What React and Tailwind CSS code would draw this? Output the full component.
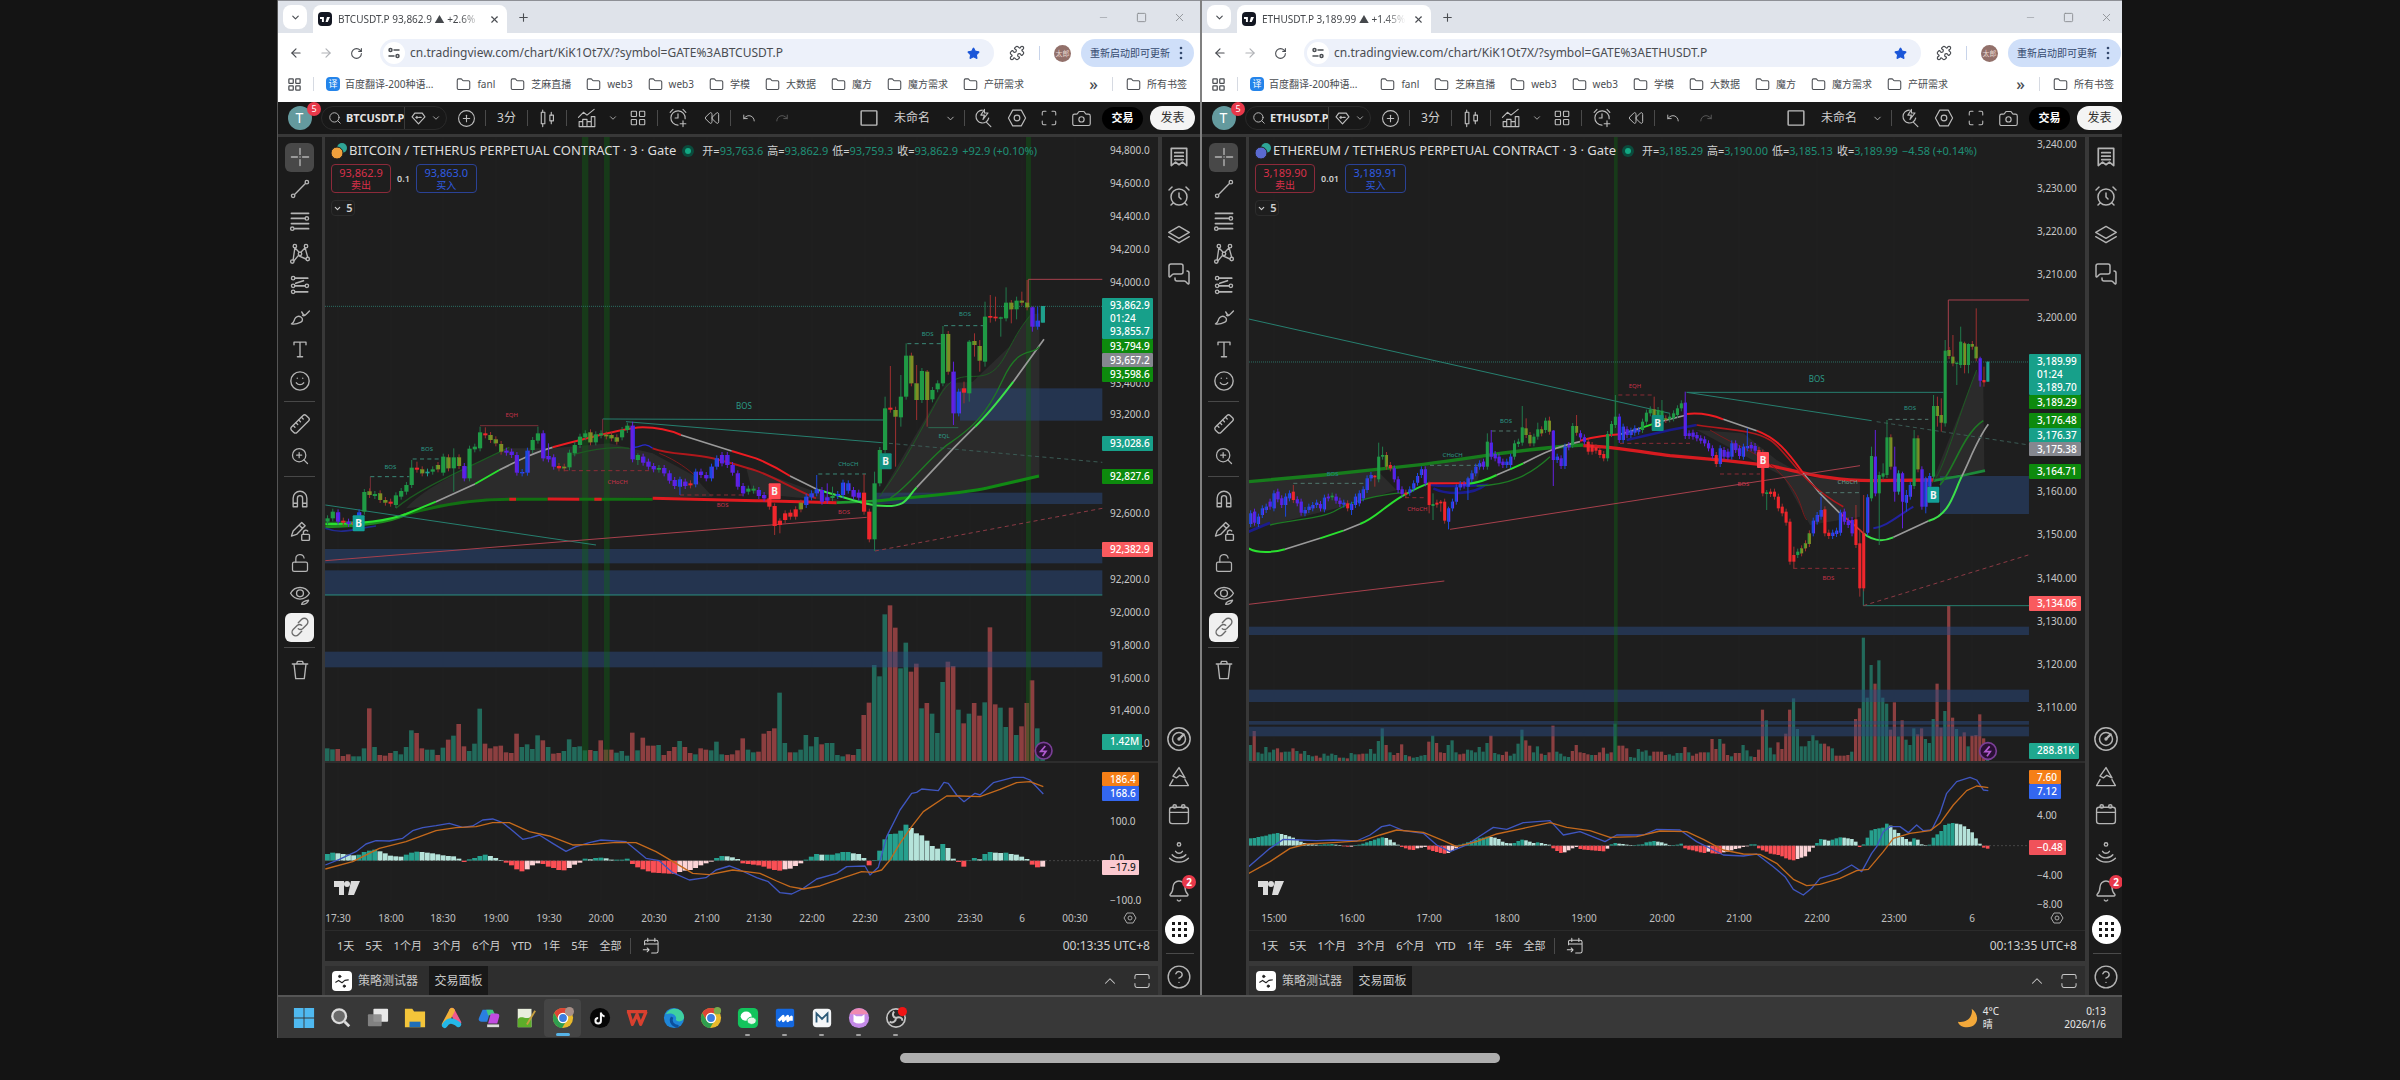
import {
  AlarmClock, ArrowLeft, ArrowRight, Bell, Camera, ChevronDown, ChevronUp, CircleHelp, CirclePlus,
  Folder, Layers, LayoutGrid, Maximize, MessagesSquare, Minus, Plus, Puzzle, Redo, Rewind,
  RotateCw, Ruler, Search, Smile, Square, Star, Undo, LockOpen, X, ZoomIn,
} from 'lucide-react'

const UP = '#226a5b'
const DOWN = '#8c3f40'
const CANDLE = { G: '#1f9a45', O: '#7f8c24', B: '#1b48e0', P: '#6420e0', R: '#f0262c', T: '#1fa08c' }

const btc = {
  symbol: 'BTCUSDT.P',
  tabTitle: 'BTCUSDT.P 93,862.9 ▲ +2.6%',
  url: 'cn.tradingview.com/chart/KiK1Ot7X/?symbol=GATE%3ABTCUSDT.P',
  name: 'BITCOIN / TETHERUS PERPETUAL CONTRACT · 3 · Gate',
  coin: '#f0a03c',
  ohlc: [['开', '93,763.6'], ['高', '93,862.9'], ['低', '93,759.3'], ['收', '93,862.9']],
  change: '+92.9 (+0.10%)',
  sell: '93,862.9',
  lot: '0.1',
  buy: '93,863.0',
  width: 833,
  left: -49,
  axis: 777,
  plotEnd: 2479,
  first: 154.6,
  step: 15.78,
  zero: 1982,
  bolt: [2303, 1652],
  ticks: [
    [13, '94,800.0'], [46, '94,600.0'], [79, '94,400.0'], [112, '94,200.0'], [145, '94,000.0'], [246, '93,400.0'],
    [277, '93,200.0'], [376, '92,600.0'], [442, '92,200.0'], [475, '92,000.0'], [508, '91,800.0'],
    [541, '91,600.0'], [573, '91,400.0'], [606, '91,200.0'], [684, '100.0'], [721, '0.0'], [763, '−100.0'],
  ],
  tags: [
    [161, 41, 51, '#17a08a', ['93,862.9', '01:24', '93,855.7']],
    [202, 14, 51, '#0d8a0d', ['93,794.9']],
    [216, 14, 51, '#85878f', ['93,657.2']],
    [230, 15, 51, '#0d8a0d', ['93,598.6']],
    [299, 15, 51, '#17a08a', ['93,028.6']],
    [332, 15, 51, '#0d8a0d', ['92,827.6']],
    [405, 15, 51, '#f95a5e', ['92,382.9']],
    [597, 16, 40, '#1fa88f', ['1.42M']],
    [635, 14, 37, '#f57f17', ['186.4']],
    [649, 15, 37, '#3367f0', ['168.6']],
    [723, 15, 37, '#fbc9d0', ['−17.9'], '#222222'],
  ],
  times: [
    [13, '17:30'], [66, '18:00'], [118, '18:30'], [171, '19:00'], [224, '19:30'], [276, '20:00'], [329, '20:30'],
    [382, '21:00'], [434, '21:30'], [487, '22:00'], [540, '22:30'], [592, '23:00'], [645, '23:30'], [697, '6'], [750, '00:30'],
  ],
  gear: 805,
  sessions: [[918, 19], [984, 17], [2250, 15]],
  zones: [[147, 1047, 2479, 43], [147, 1111, 2479, 74], [147, 1355, 2479, 47], [2052, 565, 2479, 97], [1800, 878, 2479, 34]],
  clouds: [
    'M390 925C450 860 560 810 700 745L830 745 1000 730 1130 760 1250 825 1310 890 700 897 500 915Z',
    'M1430 880L1700 905 1410 800Z',
    'M1810 890L2010 550 2090 545 2200 440 2260 345 2290 340 2290 830 2050 876Z',
  ],
  lines: [
    ['M147 1185H2479', '#2b8f80', 3],
    ['M148 980C230 978 330 972 390 943', '#1f8a1f', 9],
    ['M390 943C500 912 590 898 700 898H815', '#127012', 9],
    ['M910 898H1130', '#127012', 9],
    ['M815 897L910 898M955 898h22M700 898h20M1130 895L1440 902 1682 908', '#e01b20', 9],
    ['M1682 908L1800 903', '#1f9a30', 8],
    ['M1800 903C1980 885 2060 880 2130 865L2289 828', '#118a14', 9],
    ['M148 985C200 1005 240 985 300 978', '#222a90', 5],
    ['M148 972C250 972 330 965 390 942L480 905M597 852L670 810', '#2ae02f', 6],
    ['M480 905L597 852M670 810C730 780 780 755 830 742', '#9a9a9a', 5],
    ['M830 742C930 715 1060 682 1100 682S1180 690 1215 705M1367 753L1440 775Q1490 795 1542 828', '#ee1c22', 6],
    ['M1215 705L1367 753M1542 828L1627 870', '#9a9a9a', 5],
    ['M1627 870C1720 895 1770 918 1832 918S1890 895 1922 862M2097 680C2140 640 2170 600 2212 545', '#3ce04a', 6],
    ['M1922 862L2032 745 2097 680M2212 545L2304 418', '#9a9a9a', 5],
    ['M148 968L230 965M1842 895C1900 860 1960 770 2020 730S2130 650 2180 540 2270 470 2290 440', '#1e7a24', 4],
    ['M1810 890C1880 800 1940 680 1990 590S2090 545 2140 520 2200 420 2260 350', '#1d5a22', 3],
    ['M360 925C420 870 560 810 700 742M890 764C960 745 1020 740 1060 745', '#1d5a22', 4],
    ['M1070 740C1090 750 1100 720 1130 745', '#2a2ad0', 4],
    ['M1130 745C1180 765 1250 760 1310 775S1400 800 1440 812 1560 870 1620 895', '#b0181c', 6],
    ['M1150 760C1200 780 1240 810 1260 830', '#7a1a1c', 3],
    ['M148 915L960 1035M980 657L1822 660M1050 665L1817 728', '#26806f', 3],
    ['M1817 728L2479 787', '#3a5a54', 3, '12 10'],
    ['M148 1082L1772 952M2257 320V238H2479', '#a8404c', 3],
    ['M1797 1053L2479 925', '#8c3a44', 3, '12 10'],
    ['M283 880V830M612 677H787M980 705V657', '#7a3038', 3],
    ['M283 830H400M410 777H490M1627 822H1770M1894 431H1995M2004 377H2130', '#3b8a78', 3, '12 10'],
    ['M865 812H1130M1212 885H1400', '#8c2c36', 3, '12 10'],
    ['M1957 683H2047', '#2c6a50', 3],
  ],
  dotted: 319,
  notes: [
    [343, 800, 'BOS', '#2b9a86'], [453, 746, 'BOS', '#2b9a86'], [707, 645, 'EQH', '#c8324a'],
    [1025, 846, 'CHoCH', '#c8324a'], [1340, 915, 'BOS', '#c8324a'], [1717, 792, 'CHoCH', '#2b9a86'],
    [1955, 403, 'BOS', '#2b9a86'], [2067, 343, 'BOS', '#2b9a86'], [1704, 936, 'BOS', '#c8324a'],
    [2004, 708, 'EQL', '#2b9a86'],
  ],
  bigNote: [1404, 617],
  badges: [[248, 970, '#12a098'], [1496, 874, '#ff4650'], [1829, 784, '#12907f']],
  macd: [
    'M148 1995L190 1978 240 1955 270 1932 300 1922 340 1923 380 1915 410 1892 440 1883 480 1877 520 1870 560 1882 590 1878 620 1860 650 1857 680 1868 710 1892 740 1918 765 1913 790 1905 830 1930 870 1954 900 1940 940 1928 975 1920 1050 1925 1080 1950 1110 1975 1150 1982 1190 2018 1240 2040 1290 2033 1320 2010 1360 1998 1392 2010 1442 2033 1477 2045 1512 2078 1547 2082 1582 2065 1622 2037 1682 2020 1712 2000 1767 1998 1782 2025 1807 2002 1832 1910 1872 1830 1907 1780 1922 1777 1937 1767 1987 1772 2004 1747 2017 1750 2042 1785 2064 1805 2097 1780 2112 1785 2152 1748 2212 1732 2242 1732 2262 1740 2302 1782',
    'M148 2007L230 1985 310 1945 390 1925 480 1892 540 1883 600 1880 650 1868 700 1868 760 1895 820 1908 890 1935 950 1933 1020 1927 1080 1928 1140 1955 1200 1990 1250 2020 1300 2024 1370 2010 1452 2020 1502 2043 1542 2060 1582 2067 1632 2058 1692 2037 1757 2015 1792 2017 1817 2010 1842 1980 1872 1930 1907 1880 1942 1835 2012 1788 2052 1788 2112 1790 2172 1768 2222 1748 2262 1745 2302 1760',
  ],
  volume: [
    38, 35, -36, -15, -20, 14, 14, 38, -158, 42, -18, -16, -24, 30, 20, 42, 92, -84, -38, 34, 34, -18, 40, -64, 76,
    -111, -44, 30, 52, 157, -52, -38, -44, -46, -26, -24, -82, 42, 50, 36, 77, -62, 42, -22, -24, 30, 65, 42, 44, 32,
    -33, 30, -62, -34, -34, 25, 30, 16, -85, 32, -70, -46, -46, 48, -18, -30, -42, 60, -42, -24, 20, -38, -34, 32, 58,
    20, -18, -20, -32, -68, 34, 26, -28, -82, -90, -98, 205, 54, -26, 26, 34, 78, 44, 72, -50, 54, 54, 18, 14, -20,
    -18, 36, -138, -175, 288, 254, 440, -467, -400, 278, 355, -268, -292, 158, -174, 142, 84, 237, -298, -285, 154,
    -113, 142, -174, -136, 176, -401, -170, 160, 102, -160, 78, -104, -174, -242, 98, 30,
  ],
  hist: [
    20, 24, 22, 20, 18, 16, 18, 26, 30, 33, 28, 22, 15, 13, 12, 18, 24, 27, 26, 24, 22, 19, 16, 14, 13, 6, -4, 4, 8,
    14, 18, 14, 8, 2, -6, -14, -26, -32, -26, -14, -8, -10, -18, -22, -28, -29, -22, -12, -6, 6, 4, 8, 9, 7, 3, 3, 3,
    6, -10, -20, -26, -32, -36, -37, -38, -39, -40, -34, -30, -28, -22, -14, -8, -3, 8, 14, 13, 10, 5, -8, -10, -12,
    -14, -18, -24, -28, -30, -26, -24, -16, -8, 3, 12, 20, 18, 18, 18, 22, 26, 26, 22, 20, 8, -14, 2, 30, 64, 80, 81,
    90, 108, 98, 82, 76, 60, 44, 36, 50, 38, 6, -4, -18, 1, 8, 4, 20, 26, 24, 23, 24, 20, 18, 12, 5, -12, -20, -18,
  ],
  candles: [
    [955, 965, 'G'], [935, 955, 'G'], [937, 965, 'P'], [962, 968, 'R'], [965, 972, 'P'], [965, 975, 'R'], [937, 975, 'B'],
    [876, 935, 'G'], [874, 885, 'O'], [882, 888, 'G'], [880, 900, 'O'], [900, 908, 'O'], [905, 911, 'R'], [886, 915, 'G'],
    [873, 890, 'G'], [855, 875, 'G'], [803, 855, 'G', 780], [803, 809, 'R', 785], [808, 820, 'O'], [815, 820, 'T'],
    [808, 815, 'G'], [795, 808, 'O'], [770, 818, 'G'], [772, 805, 'O'], [772, 805, 'G', 745, 875], [772, 798, 'O'],
    [798, 835, 'P'], [746, 835, 'G'], [740, 748, 'G'], [697, 745, 'G', 680], [700, 706, 'R', 682], [705, 720, 'O'],
    [718, 730, 'O'], [732, 755, 'O'], [752, 758, 'P'], [755, 765, 'P'], [765, 818, 'P'], [816, 820, 'B'], [752, 818, 'B'],
    [720, 750, 'G'], [700, 722, 'G', 680], [700, 775, 'P'], [768, 778, 'P', 730], [772, 800, 'P'], [798, 805, 'R'],
    [800, 805, 'O'], [758, 802, 'G'], [735, 760, 'G'], [710, 735, 'G'], [700, 712, 'G'], [697, 727, 'O'], [703, 727, 'G'],
    [700, 706, 'G'], [704, 709, 'O'], [705, 715, 'O'], [712, 725, 'O'], [690, 712, 'G'], [677, 690, 'G'],
    [677, 778, 'P', 665], [765, 780, 'G', 760, 795], [770, 788, 'P'], [785, 800, 'P'], [798, 808, 'P'], [804, 809, 'G'],
    [804, 820, 'P'], [820, 842, 'P'], [840, 858, 'P'], [838, 860, 'B', 830, 885], [845, 858, 'P'], [850, 856, 'R'],
    [815, 853, 'B'], [815, 825, 'P'], [825, 835, 'P'], [800, 835, 'B'], [775, 800, 'B'], [765, 790, 'P'], [765, 795, 'P'],
    [795, 818, 'P'], [820, 860, 'P'], [858, 880, 'P'], [866, 875, 'G'], [866, 872, 'G'], [870, 888, 'P'], [885, 895, 'P'],
    [895, 920, 'R'], [918, 978, 'R', 910, 1005], [962, 975, 'R', 955, 1000], [940, 960, 'R'], [938, 950, 'R'],
    [928, 950, 'R'], [908, 928, 'O'], [890, 915, 'B'], [880, 892, 'B'], [868, 880, 'B', 825], [870, 905, 'P'],
    [892, 902, 'P', 850], [888, 894, 'G', 860], [882, 888, 'B'], [848, 885, 'B'], [850, 872, 'B'], [870, 890, 'P'],
    [878, 893, 'P'], [878, 935, 'R', 822], [935, 1018, 'R'], [850, 1018, 'G', 815, 1053], [750, 850, 'G'],
    [625, 750, 'G', 590], [623, 629, 'R', 498], [630, 650, 'O', 620, 800], [590, 652, 'G', 525, 680], [467, 590, 'G', 430],
    [467, 550, 'O'], [550, 600, 'O', 495, 660], [513, 600, 'G'], [515, 600, 'O', 510, 680], [570, 598, 'G'],
    [550, 568, 'G'], [402, 550, 'G', 378], [402, 515, 'O'], [515, 640, 'P', 485, 675], [575, 640, 'B'],
    [565, 578, 'R', 545, 610], [425, 580, 'G', 420, 605], [423, 435, 'O', 400, 470], [438, 482, 'O', 420, 515],
    [350, 485, 'G', 305, 500], [348, 353, 'R', 285, 368], [350, 355, 'R', 290], [352, 356, 'G', 350, 410],
    [308, 355, 'G', 262], [308, 328, 'O', 300, 370], [302, 328, 'G', 290, 358], [302, 308, 'O', 275], [308, 322, 'O', 240],
    [322, 380, 'P', 320, 395], [362, 380, 'B', 320], [318, 368, 'T', 318, 368],
  ],
}

const eth = {
  symbol: 'ETHUSDT.P',
  tabTitle: 'ETHUSDT.P 3,189.99 ▲ +1.45%',
  url: 'cn.tradingview.com/chart/KiK1Ot7X/?symbol=GATE%3AETHUSDT.P',
  name: 'ETHEREUM / TETHERUS PERPETUAL CONTRACT · 3 · Gate',
  coin: '#5a6ad0',
  ohlc: [['开', '3,185.29'], ['高', '3,190.00'], ['低', '3,185.13'], ['收', '3,189.99']],
  change: '−4.58 (+0.14%)',
  sell: '3,189.90',
  lot: '0.01',
  buy: '3,189.91',
  width: 836,
  left: -59,
  axis: 780,
  plotEnd: 2517,
  first: 182,
  step: 11.64,
  zero: 1937,
  bolt: [2394, 1653],
  ticks: [
    [7, '3,240.00'], [51, '3,230.00'], [94, '3,220.00'], [137, '3,210.00'], [180, '3,200.00'], [354, '3,160.00'],
    [397, '3,150.00'], [441, '3,140.00'], [484, '3,130.00'], [527, '3,120.00'], [570, '3,110.00'], [678, '4.00'],
    [738, '−4.00'], [767, '−8.00'],
  ],
  tags: [
    [217, 41, 52, '#17a08a', ['3,189.99', '01:24', '3,189.70']],
    [258, 14, 52, '#0d8a0d', ['3,189.29']],
    [276, 15, 52, '#0d8a0d', ['3,176.48']],
    [291, 14, 52, '#17a08a', ['3,176.37']],
    [305, 14, 52, '#85878f', ['3,175.38']],
    [327, 15, 52, '#0d8a0d', ['3,164.71']],
    [459, 15, 52, '#f95a5e', ['3,134.06']],
    [606, 16, 50, '#1fa88f', ['288.81K']],
    [633, 14, 32, '#f57f17', ['7.60']],
    [647, 15, 32, '#3367f0', ['7.12']],
    [703, 15, 37, '#f0525a', ['−0.48']],
  ],
  times: [
    [25, '15:00'], [103, '16:00'], [180, '17:00'], [258, '18:00'], [335, '19:00'], [413, '20:00'], [490, '21:00'],
    [568, '22:00'], [645, '23:00'], [723, '6'],
  ],
  gear: 808,
  sessions: [[1272, 11]],
  zones: [[176, 1280, 2517, 25], [176, 1469, 2517, 37], [176, 1563, 2517, 11], [176, 1580, 2517, 29], [2250, 828, 2517, 114]],
  clouds: [
    'M176 845L400 826 560 810 620 870 440 925 240 975 176 985Z',
    'M700 795L880 770 860 850 715 850Z',
    'M1520 690L1660 700 1760 780 1850 830 2010 842 2010 950 1860 975 1780 830Z',
    'M2230 838L2360 510 2380 560 2383 810Z',
  ],
  lines: [
    ['M715 853C760 862 830 858 885 855 850 885 770 885 730 865M1310 720L1440 690 1520 675M176 995L240 968', '#1b1b8c', 8],
    ['M176 845L400 825 560 808 700 793C880 770 1000 745 1180 735', '#177d1c', 10],
    ['M1180 737C1270 740 1350 755 1440 767L1610 782 1740 797C1850 820 1920 842 2050 842L2230 840', '#d81b20', 10],
    ['M2230 842L2310 828 2385 812', '#1d8a3a', 8],
    ['M176 1045C200 1060 250 1058 285 1048M390 1015L460 992M510 972C570 950 590 900 715 850M830 852C870 848 900 835 920 825M960 808L1000 790M1350 685L1410 665', '#2ae02f', 6],
    ['M285 1048L390 1015M460 992L510 972M920 825L960 808M1000 790C1040 770 1080 745 1170 725M1290 703L1350 685M1410 665L1490 645', '#9a9a9a', 5],
    ['M715 850H830M1170 722C1210 712 1240 705 1290 703M1490 642C1530 638 1560 642 1600 658M1700 692C1760 715 1790 750 1840 820', '#ee1c22', 6],
    ['M1600 658L1700 692M1840 820L1890 880 1950 940', '#9a9a9a', 5],
    ['M1950 940C1980 965 2000 980 2020 1000', '#e03030', 5],
    ['M2020 1000C2050 1025 2080 1025 2110 1012M2215 963C2280 945 2290 880 2315 830', '#3ce04a', 6],
    ['M2110 1012L2215 963M2315 830C2340 780 2360 720 2395 673', '#9a9a9a', 5],
    ['M240 975C330 955 400 955 440 930S560 885 640 878M860 858C960 855 1020 825 1080 770', '#1e7a24', 4],
    ['M2225 850C2260 820 2300 660 2360 510', '#1d5a22', 3],
    ['M2250 855C2290 810 2320 700 2380 662', '#1e7a24', 5],
    ['M2050 985C2090 980 2120 950 2170 920', '#2222a0', 6],
    ['M1520 675C1620 690 1690 690 1740 720S1830 850 1960 920', '#b0181c', 5],
    ['M1560 690C1640 740 1720 760 1780 830S1830 930 1850 960', '#7a1a1c', 3],
    ['M176 357L1440 640M1490 577H2260M1490 577L2045 662M2020 1217H2517M2020 1165V1217', '#26806f', 3],
    ['M2060 665L2517 735', '#3a5a54', 3, '12 10'],
    ['M780 988L1410 890 2010 797M176 1213L763 1143M2275 450V300H2517', '#a8404c', 3],
    ['M2020 1217L2515 1065', '#8c3a44', 3, '12 10'],
    ['M310 850H520M720 796H880M905 693H980M2095 658H2215M1885 878H2015', '#50776e', 3, '12 10'],
    ['M1285 585H1390M645 893H710M1290 730H1500M1590 822H1710M1810 1105H1995', '#8c2c36', 3, '12 10'],
  ],
  dotted: 486,
  notes: [
    [428, 823, 'BOS', '#2b7a96'], [788, 766, 'CHoCH', '#2b9a86'], [948, 662, 'BOS', '#2b9a86'],
    [682, 926, 'CHoCH', '#c8324a'], [1335, 558, 'EQH', '#c8324a'], [2160, 625, 'BOS', '#2b9a86'],
    [1973, 847, 'CHoCH', '#6aa090'], [1660, 852, 'BOS', '#c8324a'], [1915, 1135, 'BOS', '#c8324a'],
  ],
  bigNote: [1880, 537],
  badges: [[1403, 669, '#12907f'], [1719, 780, '#ff4650'], [2230, 884, '#12a098']],
  macd: [
    'M176 2000L240 1945 280 1918 330 1920 380 1922 430 1920 500 1923 540 1905 575 1880 600 1875 640 1892 700 1900 740 1935 780 1955 830 1935 870 1908 910 1882 950 1888 1000 1868 1080 1862 1120 1905 1170 1895 1245 1925 1280 1905 1360 1905 1400 1888 1470 1890 1520 1925 1600 1965 1660 1968 1700 1962 1750 2000 1785 2030 1810 2068 1840 2085 1865 2065 1890 2035 1940 2020 1985 1995 2015 2015 2045 1960 2060 1940 2080 1895 2100 1880 2130 1880 2155 1898 2180 1875 2200 1892 2225 1890 2250 1840 2270 1780 2300 1745 2340 1732 2360 1740 2380 1770 2395 1772',
    'M176 2020L240 1985 300 1945 350 1932 430 1928 520 1922 570 1905 620 1890 700 1897 760 1922 800 1940 860 1925 920 1902 1000 1885 1080 1868 1130 1882 1200 1892 1260 1912 1340 1910 1410 1893 1490 1895 1540 1918 1600 1950 1660 1962 1710 1963 1760 1990 1810 2038 1850 2057 1890 2053 1950 2035 2000 2012 2035 2008 2080 1955 2110 1915 2160 1900 2220 1892 2250 1870 2290 1815 2330 1772 2360 1758 2395 1763',
  ],
  volume: [
    48, -90, 26, 22, 42, 26, 34, -38, -26, 28, 28, -38, 30, -22, 30, 18, 14, -16, -10, 22, 16, 22, 18, -10, 10, -8, 24,
    20, -20, -22, 22, 36, 22, 60, 98, -48, 26, -18, -24, -50, 18, -14, 10, 12, 16, 18, -58, 76, -54, -26, -24, 48, 62,
    26, -20, -22, 34, 32, 26, 42, 28, 54, -76, 24, 20, -18, -28, 16, 22, 52, 94, -62, -46, 26, 44, -22, 18, -26, -106,
    28, 22, 14, 12, -30, -48, -26, -24, -20, 18, -18, -26, -40, 22, -26, 112, -46, -46, -38, 12, 10, 36, 28, 32, 16,
    -28, -28, -28, -18, 20, 16, 24, 24, -42, 26, -16, -22, -26, -26, 26, -66, -36, 66, -52, -18, 14, -24, -24, 48, 32,
    14, -12, -34, -154, 122, 40, 20, -56, -36, -82, -154, 188, 96, 44, 44, 60, 78, 62, 52, -52, -44, 38, -16, -16, -16,
    -18, 28, -126, -158, 370, 190, 288, -232, 302, 190, 172, -94, -176, 74, -122, 64, 48, 98, -80, -98, 66, 54, 126,
    -232, -100, 150, -466, -130, 96, -74, -86, 44, -76, -78, -140, -68, 20,
  ],
  hist: [
    22, 23, 26, 28, 30, 34, 36, 38, 35, 32, 28, 24, 18, 12, 8, 5, 4, 3, 3, 4, 4, 5, 3, 2, -2, -3, -3, 2, 3, 6, 10, 14,
    18, 22, 25, 23, 18, 10, 3, -4, -8, -12, -13, -8, -6, -4, -12, -16, -19, -22, -24, -22, -16, -8, 3, 6, 10, 14, 18,
    22, 24, 27, 26, 24, 20, 12, 8, 7, 8, 14, 18, 16, 12, 8, 10, 8, 5, 3, -8, -16, -22, -20, -14, -8, -4, -10, -12, -13,
    -14, -15, -16, -17, -9, 4, 8, 6, 5, 3, 2, 2, 3, 4, 10, 12, 14, 12, 10, 6, 2, 2, 3, 6, -8, -12, -14, -17, -20, -22,
    -18, -23, -24, -25, -20, -18, -14, -10, -8, -4, -2, 4, 4, -8, -14, -18, -24, -26, -28, -32, -38, -42, -44, -40,
    -36, -32, -18, -6, 8, 20, 18, 15, 18, 22, 25, 24, 22, 20, 12, -4, 4, 24, 46, 50, 52, 54, 66, 60, 48, 38, 26, 20,
    12, 22, 18, 4, 2, 3, 24, 34, 44, 62, 66, 68, 66, 64, 58, 50, 40, 22, 6, -6, -9,
  ],
  candles: [
    [940, 972, 'B'], [935, 968, 'P'], [950, 972, 'B'], [925, 945, 'B'], [920, 930, 'B'], [905, 920, 'P'], [880, 925, 'B'],
    [875, 898, 'P'], [895, 915, 'P'], [890, 915, 'B', 880, 950], [880, 895, 'B'], [875, 900, 'R', 855], [898, 910, 'P'],
    [905, 938, 'P'], [930, 940, 'B'], [920, 930, 'B'], [915, 925, 'B'], [908, 915, 'B'], [912, 925, 'P'], [893, 928, 'B'],
    [890, 895, 'P'], [887, 892, 'G'], [890, 902, 'P'], [902, 912, 'P'], [908, 914, 'B'], [910, 925, 'R'],
    [912, 930, 'B', 905, 945], [890, 915, 'B'], [880, 910, 'B'], [868, 895, 'B'], [835, 870, 'B'], [825, 835, 'B'],
    [827, 832, 'R', 825, 860], [770, 838, 'G', 728], [765, 770, 'G', 740], [765, 800, 'O'], [795, 805, 'R'],
    [805, 838, 'P'], [838, 870, 'P'], [868, 882, 'P'], [878, 884, 'R'], [868, 878, 'B'], [850, 866, 'B'], [828, 848, 'B'],
    [808, 825, 'B'], [808, 850, 'P'], [850, 915, 'R', 845, 940], [912, 918, 'G', 880, 960], [908, 914, 'R'],
    [905, 910, 'R', 900, 935], [905, 962, 'R'], [925, 965, 'B', 920, 988], [905, 925, 'B'], [862, 905, 'B'],
    [852, 862, 'B'], [852, 857, 'P'], [835, 860, 'B', 830, 900], [820, 838, 'B'], [800, 820, 'B'], [790, 800, 'B'],
    [785, 800, 'P'], [725, 800, 'G', 700], [728, 770, 'P', 690], [762, 775, 'P'], [770, 790, 'P'], [785, 795, 'P'],
    [785, 795, 'B'], [770, 795, 'B'], [730, 770, 'G'], [725, 732, 'G'], [682, 728, 'G', 618], [685, 705, 'O', 655],
    [705, 730, 'O'], [710, 730, 'G'], [688, 710, 'G', 668], [688, 700, 'O'], [662, 690, 'G'], [662, 695, 'O', 650],
    [692, 780, 'P', 690, 858], [770, 780, 'B'], [775, 798, 'P'], [740, 798, 'B'], [735, 742, 'P'], [678, 735, 'G'],
    [678, 698, 'O', 645], [700, 712, 'P'], [712, 725, 'P'], [725, 755, 'R'], [735, 755, 'R'], [742, 752, 'R'],
    [750, 765, 'R'], [762, 775, 'R'], [702, 775, 'G'], [672, 702, 'G'], [650, 675, 'G', 585], [650, 720, 'P'],
    [680, 720, 'B'], [688, 705, 'P'], [692, 705, 'B'], [685, 698, 'B'], [690, 695, 'B'], [665, 690, 'G'],
    [638, 665, 'G'], [628, 640, 'G'], [628, 645, 'O', 590], [630, 650, 'G'], [632, 658, 'G', 600], [655, 660, 'O'],
    [650, 658, 'G'], [640, 655, 'G'], [625, 645, 'G'], [610, 625, 'G'], [608, 708, 'P', 575], [700, 708, 'P'],
    [698, 710, 'P'], [705, 715, 'P'], [715, 722, 'P'], [718, 730, 'P'], [730, 745, 'P'], [745, 768, 'P'],
    [765, 792, 'R'], [745, 792, 'B'], [750, 770, 'P'], [755, 772, 'P'], [730, 770, 'B'], [730, 750, 'P'],
    [745, 768, 'P'], [740, 770, 'B'], [738, 745, 'B', 685], [735, 745, 'P'], [738, 752, 'P'], [750, 758, 'R'],
    [758, 880, 'R'], [877, 882, 'G', 870, 930], [875, 882, 'R'], [875, 890, 'R'], [890, 925, 'R'], [920, 940, 'R'],
    [935, 968, 'R'], [965, 1085, 'R'], [1065, 1085, 'R', 1040, 1105], [1055, 1065, 'G'], [1045, 1060, 'O'],
    [1030, 1045, 'O'], [1000, 1032, 'O'], [962, 1000, 'B'], [945, 965, 'B'], [930, 950, 'B', 890], [928, 1000, 'R'],
    [998, 1008, 'R'], [998, 1008, 'B'], [992, 1002, 'B'], [938, 998, 'B'], [935, 965, 'P'], [962, 975, 'P'],
    [960, 1000, 'P'], [958, 1035, 'R', 915], [1030, 1165, 'R', 990, 1190], [1000, 1165, 'R', 885], [892, 998, 'B'],
    [768, 895, 'G', 740], [770, 880, 'P', 690], [825, 880, 'G', 815, 1035], [820, 830, 'G', 790], [712, 825, 'G', 660],
    [712, 800, 'O'], [800, 875, 'P', 740, 905], [820, 875, 'T'], [820, 905, 'P', 815, 985], [885, 908, 'B', 870, 935],
    [855, 890, 'B'], [715, 858, 'G', 690], [715, 808, 'O'], [808, 920, 'P'], [835, 920, 'B', 830, 940], [828, 860, 'B'],
    [618, 830, 'G', 585], [618, 648, 'O', 590, 680], [645, 668, 'O', 595, 695], [452, 670, 'G', 420, 680],
    [450, 468, 'O'], [470, 490, 'O', 405], [488, 492, 'G', 488, 555], [425, 495, 'G', 380], [430, 495, 'O', 425, 520],
    [432, 495, 'G', 430, 520], [432, 440, 'O'], [440, 475, 'O', 325], [475, 542, 'P', 470, 560], [540, 547, 'R', 500, 560],
    [485, 545, 'T', 485, 545],
  ],
}

// plots are drawn at three units to a pixel
function ChartDrawing({ m }) {
  const x = (i) => m.first + i * m.step
  const px = (v) => v / 3 + m.left
  const py = (v) => v / 3 + 63
  const plotLeft = -m.left * 3
  return (
    <svg viewBox={`0 0 ${m.width} 793`} className="block w-full h-auto" role="img" aria-label={m.name}>
      <rect width={m.width} height="793" fill="#1e1e1e" />
      <g transform={`translate(${m.left} 63) scale(0.33333)`}>
        {m.times.map(([t]) => <path key={t} d={`M${(t - m.left) * 3} -189V2100`} stroke="#222222" strokeWidth="3" />)}
        {m.clouds.map((d) => <path key={d} d={d} fill="#2b2b2b" />)}
        {m.volume.map((v, i) => (
          <rect key={i} x={x(i) - m.step / 2} y={1683 - Math.abs(v)} width={m.step - 2} height={Math.abs(v)} fill={v > 0 ? UP : DOWN} />
        ))}
        {m.zones.map(([zx, y, x2, h]) => <rect key={y} x={zx} y={y} width={x2 - zx} height={h} fill="#2a4a80" opacity="0.5" />)}
        {m.sessions.map(([sx, w]) => <rect key={sx} x={sx} y="-189" width={w} height="1872" fill="#0c6a12" opacity="0.38" />)}
        <path d={`M${plotLeft} ${m.dotted}H${m.plotEnd}`} stroke="#2c6f64" strokeWidth="3" strokeDasharray="3 3" />
        {m.lines.map(([d, stroke, w, dash]) => (
          <path key={d} d={d} stroke={stroke} strokeWidth={w} strokeDasharray={dash} fill="none" />
        ))}
        {m.candles.map(([top, bottom, c, hi = top - 9, lo = bottom + 9], i) => (
          <g key={i}>
            <path d={`M${x(i)} ${hi}V${lo}`} stroke={c === 'O' || c === 'R' ? '#a03030' : c === 'G' ? '#217a4c' : CANDLE[c]} strokeWidth="3" />
            <rect x={x(i) - m.step * 0.4} y={top} width={m.step * 0.8} height={bottom - top} fill={CANDLE[c]} />
            {(c === 'P' || c === 'B') && (
              <path d={`M${x(i) + m.step * 0.3} ${top}V${bottom}`} stroke={c === 'P' ? '#2f2ff0' : '#7030f0'} strokeWidth="3" />
            )}
            {c === 'O' && <path d={`M${x(i) - m.step * 0.3} ${top}V${bottom}`} stroke="#2f9a35" strokeWidth="3" />}
          </g>
        ))}
        {m.hist.map((v, i) => {
          const prev = m.hist[i - 1] ?? 0
          const fill = v > 0 ? (v >= prev ? '#26a08e' : '#b5e3da') : v < prev ? '#fb4f55' : '#fbd3d6'
          return <rect key={i} x={x(i) - m.step / 2} y={v > 0 ? m.zero - v : m.zero} width={m.step - 1} height={Math.abs(v)} fill={fill} />
        })}
        <path d={`M${plotLeft} ${m.zero}H${m.plotEnd}`} stroke="#5a5a5a" strokeWidth="2" strokeDasharray="6 6" />
        <path d={m.macd[0]} fill="none" stroke="#3f56c0" strokeWidth="4" strokeLinejoin="round" />
        <path d={m.macd[1]} fill="none" stroke="#c4691c" strokeWidth="4" strokeLinejoin="round" />
        <circle cx={m.bolt[0]} cy={m.bolt[1]} r="25" fill="#2a1035" stroke="#7a3f96" strokeWidth="5" />
        <path d={`M${m.bolt[0] + 5} ${m.bolt[1] - 14}l-14 16h16l-10 14`} fill="none" stroke="#b05ad0" strokeWidth="5" />
      </g>

      <path d={`M0 625H${m.width}`} stroke="#3c3c3c" />
      {m.notes.map(([nx, ny, t, fill]) => (
        <text key={`${nx}-${ny}`} x={px(nx)} y={py(ny) + 2} textAnchor="middle" className="text-[6px]" fill={fill}>{t}</text>
      ))}
      <text x={px(m.bigNote[0])} y={py(m.bigNote[1]) + 3} textAnchor="middle" className="text-[8px]" fill="#2b9a86">BOS</text>
      {m.badges.map(([bx, by, fill]) => (
        <g key={bx}>
          <rect x={px(bx) - 6} y={py(by) - 8} width="12" height="16" rx="1" fill={fill} />
          <text x={px(bx)} y={py(by) + 4} textAnchor="middle" className="text-[10px] font-bold" fill="#f4f4f4">B</text>
        </g>
      ))}

      {m.ticks.map(([y, t]) => <text key={t} x={m.axis + 8} y={y + 4} className="text-[10px]" fill="#c8c8c8">{t}</text>)}
      {m.tags.map(([y, h, w, fill, texts, color = '#ffffff']) => (
        <g key={y}>
          <rect x={m.axis} y={y} width={w} height={h} rx="1" fill={fill} />
          {texts.map((t, i) => (
            <text key={t} x={m.axis + 8} y={y + 11 + i * 13} className="text-[10px] font-medium" fill={color}>{t}</text>
          ))}
        </g>
      ))}
      {m.times.map(([tx, t]) => <text key={tx} x={tx} y="785" textAnchor="middle" className="text-[10px]" fill="#c0c0c0">{t}</text>)}
      <path d={`M${m.gear - 6} 781l3-5h6l3 5-3 5h-6z`} fill="none" stroke="#a8a8a8" />
      <circle cx={m.gear} cy="781" r="2" fill="none" stroke="#a8a8a8" />
      <path d="M9 744h10v14h-5v-8h-5zM26 744h9l-6 14h-6z" fill="#dcdcdc" />
      <circle cx="22" cy="747" r="3" fill="#dcdcdc" />
    </svg>
  )
}

function Glyph({ children, className = 'w-6 h-6' }) {
  return (
    <svg viewBox="0 0 28 28" className={className} fill="none" stroke="currentColor" strokeWidth="1.6" strokeLinecap="round" strokeLinejoin="round">
      {children}
    </svg>
  )
}

const drawTools = [
  ['十字线', <Glyph><path d="M14 4v7M14 17v7M4 14h7M17 14h7M14 14h.1" /></Glyph>],
  ['趋势线', <Glyph><circle cx="6" cy="22" r="2" /><circle cx="22" cy="6" r="2" /><path d="M8 20L20 8" /></Glyph>],
  ['斐波那契', <Glyph><path d="M4 5h20M4 11h16M4 17h20M8 23h16" strokeWidth="2" /><circle cx="22" cy="11" r="2" /><circle cx="5" cy="23" r="2" /></Glyph>],
  ['形态', <Glyph><circle cx="5" cy="24" r="2" /><circle cx="8" cy="6" r="2" /><circle cx="14" cy="15" r="2" /><circle cx="21" cy="6" r="2" /><circle cx="23" cy="21" r="2" /><path d="M6 22L8 8l5 5M15 13l5-5 3 11M7 23l5-6 9 4" /></Glyph>],
  ['预测', <Glyph><circle cx="6" cy="6" r="2" /><circle cx="6" cy="15" r="2" /><circle cx="22" cy="15" r="2" /><circle cx="6" cy="22" r="2" /><path d="M8 6h15M8 15h12M8 22h15M9 12l9-3" strokeWidth="2" /></Glyph>],
  ['画笔', <Glyph><path d="M4 22c3-1 3-4 4-6s4-4 7-2 2 5 0 6-7 3-11 2zM17 12c2 2 4-1 8-5M16 8c1 2 2 4 4 4" /></Glyph>],
  ['文字', <Glyph><path d="M7 9V6h14v3M14 6v17M11 23h6" /></Glyph>],
  ['表情', <Smile size={22} strokeWidth={1.5} />],
]

const measureTools = [
  ['测量', <Ruler size={22} strokeWidth={1.5} className="-scale-x-100" />],
  ['放大', <ZoomIn size={20} strokeWidth={1.5} />],
]

const lockTools = [
  ['磁铁', <Glyph><path d="M6 23V13a8 8 0 0116 0v10h-5V13a3 3 0 00-6 0v10zM6 19h5M17 19h5" /></Glyph>],
  ['保持绘图模式', <Glyph><path d="M4 20l2-6L16 4l4 4-10 10zM13 7l4 4" /><rect x="16" y="18" width="9" height="7" rx="1" /><path d="M18 18v-3a3 3 0 015-1" /></Glyph>],
  ['锁定', <LockOpen size={20} strokeWidth={1.5} />],
  ['隐藏', <Glyph><path d="M3 12c5-9 17-9 22 0-5 9-17 9-22 0z" /><circle cx="14" cy="12" r="4" /><path d="M16 25c0-3 3-4 8-5-1 4-4 5-8 5z" /></Glyph>],
]

function RailButton({ label, children, className = '' }) {
  return (
    <button aria-label={label} className="h-8 w-full flex items-center justify-center">
      <span className={`w-[29px] h-[29px] rounded-md flex items-center justify-center ${className}`}>{children}</span>
    </button>
  )
}

function LeftRail() {
  return (
    <div className="w-11 shrink-0 bg-[#1b1b1b] text-[#b4b4b4] pt-1 pr-px">
      {drawTools.map(([label, icon], i) => (
        <RailButton key={label} label={label} className={i === 0 ? 'bg-[#484848]' : ''}>{icon}</RailButton>
      ))}
      <div className="mt-1 mb-1.5 mx-1.5 h-px bg-[#484848]" />
      {measureTools.map(([label, icon]) => <RailButton key={label} label={label}>{icon}</RailButton>)}
      <div className="mt-1 mb-1.5 mx-1.5 h-px bg-[#484848]" />
      {lockTools.map(([label, icon]) => <RailButton key={label} label={label}>{icon}</RailButton>)}
      <RailButton label="同步绘图" className="bg-[#f0f0f0] text-[#6a6a6a]">
        <Glyph><path d="M12 9l4-4a4 4 0 016 6l-5 5a4 4 0 01-5 0M16 19l-4 4a4 4 0 01-6-6l5-5a4 4 0 015 0" /></Glyph>
      </RailButton>
      <div className="mt-1 mb-1.5 mx-1.5 h-px bg-[#484848]" />
      <RailButton label="删除">
        <Glyph><path d="M5 7h18M10 7l1-3h6l1 3M7 7l2 17h10l2-17" /></Glyph>
      </RailButton>
    </div>
  )
}

const rightTop = [
  ['自选表', <Glyph><path d="M5 4h18v20l-5-4-4 3-4-3-5 4zM9 9h10M9 13h10M9 17h10" strokeWidth="2" /></Glyph>],
  ['警报', <AlarmClock size={24} strokeWidth={1.5} />],
  ['对象树', <Glyph><path d="M14 4l12 7-12 7-12-7zM2 16l12 7 12-7" /></Glyph>],
  ['聊天', <MessagesSquare size={24} strokeWidth={1.5} />],
]

const rightBottom = [
  ['筛选器', <Glyph className="w-[26px] h-[26px]"><circle cx="14" cy="14" r="12" /><circle cx="14" cy="14" r="7" /><path d="M14 14l5-5" strokeWidth="2.5" /><circle cx="14" cy="14" r="1" /></Glyph>],
  ['Pine', <Glyph><path d="M14 3L7 13l4 2 4-3 6 3zM7 17l-4 7h22l-4-7" /></Glyph>],
  ['日历', <Glyph><rect x="3" y="5" width="22" height="19" rx="3" /><path d="M3 11h22" /><circle cx="9" cy="4" r="2" /><circle cx="19" cy="4" r="2" /></Glyph>],
  ['直播', <Glyph><circle cx="14" cy="4" r="2" /><path d="M10 12c2 3 6 3 8 0M6 16c4 5 12 5 16 0M3 20c6 6 16 6 22 0" /></Glyph>],
]

function RightRail() {
  return (
    <div className="w-[38px] shrink-0 bg-[#1b1b1b] text-[#b4b4b4] flex flex-col">
      {rightTop.map(([label, icon]) => (
        <button key={label} aria-label={label} className="h-[39px] flex items-center justify-center pr-1">{icon}</button>
      ))}
      <div className="mt-auto flex flex-col">
        {rightBottom.map(([label, icon]) => (
          <button key={label} aria-label={label} className="h-[38px] flex items-center justify-center pr-1">{icon}</button>
        ))}
        <button aria-label="通知" className="h-[38px] flex items-center justify-center pr-1 relative">
          <Bell size={24} strokeWidth={1.4} />
          <span className="absolute top-[3px] right-1 w-[14px] h-[14px] rounded-full bg-[#e8384a] text-white text-[10px] leading-[14px] font-bold">2</span>
        </button>
        <button aria-label="更多产品" className="h-[38px] flex items-center justify-center pr-1">
          <span className="w-[29px] h-[29px] rounded-full bg-white grid grid-cols-3 gap-[3px] p-[7px]">
            {[...Array(9)].map((_, i) => <span key={i} className="bg-[#1a1a1a] w-[3px] h-[3px]" />)}
          </span>
        </button>
        <div className="h-px bg-[#4a4a4a] mt-[5px] mb-[5px] ml-1 mr-1.5" />
        <button aria-label="帮助" className="h-9 flex items-center justify-center pr-1"><CircleHelp size={26} strokeWidth={1.3} /></button>
      </div>
    </div>
  )
}

const Sep = () => <span className="w-px h-4 bg-[#4a4a4a] shrink-0" />

function TopBar({ m }) {
  const cell = 'flex items-center justify-center h-full shrink-0'
  return (
    <div className="h-[32px] bg-[#181818] text-[#bdbdbd] flex items-center">
      <button aria-label="账户" className={`${cell} w-[43px] relative`}>
        <span className="w-6 h-6 rounded-full bg-[#649a9e] text-white text-sm leading-6">T</span>
        <span className="absolute top-0 right-0 w-[14px] h-[14px] rounded-full bg-[#e8384a] text-white text-[9px] leading-[14px]">5</span>
      </button>
      <div className="w-[126px] shrink-0 h-6 rounded-full border border-[#2a2a2a] flex items-center">
        <button className="flex items-center w-[83px] h-full pl-1.5 gap-1 border-r border-[#3a3a3a] overflow-hidden text-left">
          <Search size={14} strokeWidth={1.6} className="shrink-0" />
          <span className="text-[11px] font-bold text-[#e4e4e4] whitespace-nowrap">{m.symbol}</span>
        </button>
        <button aria-label="标记" className="w-[26px] flex justify-center">
          <Glyph className="w-[15px] h-[15px]"><path d="M7 4h14l5 7-12 13L2 11zM9 12h4M11 10v4M15 12h4" strokeWidth="2.2" /></Glyph>
        </button>
        <ChevronDown size={10} />
      </div>
      <button aria-label="对比" className={`${cell} w-[38px]`}><CirclePlus size={19} strokeWidth={1.4} /></button>
      <Sep />
      <button className={`${cell} w-[41px] text-xs text-[#d0d0d0]`}>3分</button>
      <Sep />
      <button aria-label="K线图" className={`${cell} w-[38px]`}>
        <Glyph className="w-5 h-5"><rect x="6" y="6" width="5" height="16" /><rect x="18" y="10" width="5" height="8" /><path d="M8 3v3M8 22v4M20 6v4M20 18v4" /></Glyph>
      </button>
      <Sep />
      <button aria-label="指标" className={`${cell} w-[40px]`}>
        <Glyph className="w-5 h-5"><path d="M2 13l7-7 5 4 10-8M3 26v-7h5v7zM8 26V16h6v10M14 26v-7h6v7M20 26V12h5v14zM3 26h22" /></Glyph>
      </button>
      <button aria-label="指标模板" className={`${cell} w-[12px]`}><ChevronDown size={10} /></button>
      <button aria-label="布局" className={`${cell} w-[38px]`}><LayoutGrid size={18} strokeWidth={1.5} /></button>
      <Sep />
      <button aria-label="添加警报" className={`${cell} w-[40px]`}>
        <Glyph className="w-5 h-5"><path d="M24 15a10 10 0 10-10 9M14 8v6h-4M3 6l4-4M21 2l4 4M21 18v8M17 22h8" /></Glyph>
      </button>
      <button aria-label="回放" className={`${cell} w-[28px]`}><Rewind size={16} strokeWidth={1.5} /></button>
      <span className="w-1" /><Sep />
      <button aria-label="撤销" className={`${cell} w-[36px]`}><Undo size={14} strokeWidth={1.6} /></button>
      <button aria-label="重做" className={`${cell} w-[30px] text-[#5a5a5a]`}><Redo size={14} strokeWidth={1.6} /></button>
      <div className="ml-auto flex items-center h-full shrink-0">
        <button aria-label="选择布局" className={`${cell} w-[26px]`}>
          <Glyph className="w-5 h-5"><rect x="3" y="4" width="22" height="20" rx="1" strokeWidth="2" /></Glyph>
        </button>
        <button className={`${cell} text-xs text-[#d0d0d0] w-[60px]`}>未命名</button>
        <button aria-label="布局菜单" className={`${cell} w-[16px] mr-[6px]`}><ChevronDown size={11} /></button>
        <Sep />
        <button aria-label="快速搜索" className={`${cell} w-[36px]`}>
          <Glyph className="w-5 h-5"><path d="M13 3a9 9 0 109 11M19 20l6 6M16 2l-5 8h5l-2 6 7-9h-5z" /></Glyph>
        </button>
        <button aria-label="设置" className={`${cell} w-[32px]`}>
          <Glyph className="w-5 h-5"><path d="M8 3h12l6 11-6 11H8L2 14z" /><circle cx="14" cy="14" r="4" /></Glyph>
        </button>
        <button aria-label="全屏" className={`${cell} w-[32px]`}><Maximize size={18} strokeWidth={1.4} /></button>
        <button aria-label="截图" className={`${cell} w-[32px]`}><Camera size={21} strokeWidth={1.3} /></button>
        <button className="w-[41px] h-[23px] rounded-full bg-black text-white text-[11px] font-bold ml-[5px] mr-[7px]">交易</button>
        <button className="w-[45px] h-6 rounded-full bg-[#f4f4f4] text-[#303030] text-xs mr-[5px]">发表</button>
      </div>
    </div>
  )
}

function Legend({ m }) {
  return (
    <div className="absolute top-1 left-1.5">
      <div className="flex items-center h-5 whitespace-nowrap">
        <svg viewBox="0 0 16 16" className="w-4 h-4 mr-0.5 shrink-0">
          <circle cx="11" cy="5" r="5" fill="#2fa597" />
          <circle cx="6" cy="10" r="6" fill={m.coin} stroke="#1e1e1e" />
        </svg>
        <span className="text-[13px] text-[#dcdcdc]">{m.name}</span>
        <span className="w-3 h-3 rounded-full bg-[#0b4a3c] ml-1.5 mr-2 flex items-center justify-center shrink-0">
          <span className="w-1.5 h-1.5 rounded-full bg-[#12a883]" />
        </span>
        <span className="text-[11px] flex gap-1 text-[#d2d2d2]">
          {m.ohlc.map(([k, v]) => <span key={k}>{k}=<span className="text-[#1f8f76]">{v}</span></span>)}
          <span className="text-[#1f8f76]">{m.change}</span>
        </span>
      </div>
      <div className="flex items-center mt-[3px] text-[11px] leading-3">
        <button className="w-[60px] h-[29px] rounded border border-[#8c2a3a] text-[#d8304a]">{m.sell}<br /><span className="text-[10px]">卖出</span></button>
        <span className="px-1.5 text-[9px] font-semibold text-[#d0d0d0]">{m.lot}</span>
        <button className="w-[61px] h-[29px] rounded border border-[#2a4296] text-[#2f5be0]">{m.buy}<br /><span className="text-[10px]">买入</span></button>
      </div>
      <button className="mt-[7px] w-6 h-4 rounded-sm border border-[#2c2c2c] flex items-center justify-center gap-1 text-[11px] font-semibold text-[#d0d0d0]">
        <ChevronDown size={9} strokeWidth={3} />5
      </button>
    </div>
  )
}

const bookmarks = ['fanl', '芝麻直播', 'web3', 'web3', '学模', '大数据', '魔方', '魔方需求', '产研需求']

function BrowserChrome({ m }) {
  return (
    <div className="text-[#4a4d52]">
      <div className="h-[33px] bg-[#dfe3ea] border-t border-[#8e9096] flex items-end">
        <button aria-label="搜索标签页" className="w-6 h-6 rounded-lg bg-white flex items-center justify-center self-center ml-[5px] mr-1.5"><ChevronDown size={11} strokeWidth={2.5} /></button>
        <div className="w-[194px] h-[28px] bg-white rounded-t-lg flex items-center pl-[5px]">
          <span className="w-[14px] h-[14px] rounded-sm bg-[#131722] flex items-center justify-center shrink-0">
            <svg viewBox="0 0 36 18" className="w-2.5 h-[5px]" fill="#ffffff"><path d="M0 0h14v18H7V7H0zM25 0h11l-8 18h-8z" /></svg>
          </span>
          <span className="ml-[6px] w-[144px] overflow-hidden whitespace-nowrap text-[10px] text-[#45484c] mask-r-from-85%">{m.tabTitle}</span>
          <button aria-label="关闭标签页" className="ml-[7px]"><X size={11} strokeWidth={2.4} /></button>
        </div>
        <button aria-label="新标签页" className="self-center ml-2.5"><Plus size={13} strokeWidth={2} /></button>
        <div className="ml-auto self-center flex items-center text-[#8a8d92] pr-3.5">
          <button aria-label="最小化" className="w-[38px] flex justify-center"><Minus size={11} strokeWidth={1.2} /></button>
          <button aria-label="最大化" className="w-[38px] flex justify-center"><Square size={11} strokeWidth={2} /></button>
          <button aria-label="关闭" className="w-[38px] -mr-3 flex justify-center"><X size={13} strokeWidth={1.6} /></button>
        </div>
      </div>
      <div className="h-[40px] bg-white flex items-center">
        <button aria-label="后退" className="w-[30px] ml-[3px] flex justify-center"><ArrowLeft size={14} strokeWidth={2} /></button>
        <button aria-label="前进" className="w-[30px] flex justify-center text-[#b0b2b6]"><ArrowRight size={14} strokeWidth={2} /></button>
        <button aria-label="重新加载" className="w-[30px] flex justify-center"><RotateCw size={13} strokeWidth={2} /></button>
        <div className="ml-[9px] flex-1 h-7 rounded-full bg-[#edf1fa] flex items-center pl-[3px]">
          <button aria-label="网站信息" className="w-[22px] h-[22px] rounded-full bg-white flex items-center justify-center">
            <Glyph className="w-3.5 h-3.5"><path d="M14 8h10M4 20h10" strokeWidth="3" /><circle cx="7" cy="8" r="3" strokeWidth="3" /><circle cx="21" cy="20" r="3" strokeWidth="3" /></Glyph>
          </button>
          <input aria-label="地址" type="text" readOnly value={m.url} className="ml-[5px] flex-1 min-w-0 bg-transparent text-xs outline-none" />
          <Star size={13} className="text-[#1c57d8] fill-[#1c57d8] mr-[14px]" />
        </div>
        <button aria-label="扩展程序" className="w-4 ml-[15px]"><Puzzle size={16} strokeWidth={1.8} /></button>
        <span className="w-px h-3.5 bg-[#c8d4ea] ml-[14px]" />
        <button aria-label="个人资料" className="w-[17px] h-[17px] rounded-full bg-[#92706a] text-[#e8d6d0] text-[7px] leading-[17px] ml-[14px]">太郎</button>
        <button className="ml-[10px] mr-[6px] h-7 w-[113px] rounded-full bg-[#cfdff9] text-[10px] text-[#34496e] flex items-center justify-between pl-[9px] pr-[11px]">
          重新启动即可更新
          <svg viewBox="0 0 4 14" className="w-1 h-3.5" fill="#34496e"><circle cx="2" cy="2" r="1.3" /><circle cx="2" cy="7" r="1.3" /><circle cx="2" cy="12" r="1.3" /></svg>
        </button>
      </div>
      <div className="h-[29px] bg-white flex items-start pt-[3px] text-[10px] whitespace-nowrap">
        <div className="flex items-center h-4 w-full">
          <button aria-label="应用" className="ml-[9px]"><LayoutGrid size={15} strokeWidth={2} /></button>
          <span className="w-px h-3.5 bg-[#d6dae2] ml-[11px] mr-[12px]" />
          <a href="#translate" className="flex items-center">
            <span className="w-[14px] h-[14px] rounded-sm bg-[#2484ea] text-white text-[9px] leading-[14px] text-center mr-[5px]">译</span>
            百度翻译-200种语...
          </a>
          <div className="flex items-center gap-[15px] ml-[23px]">
            {bookmarks.map((b, i) => (
              <a key={i} href={`#folder-${i}`} className="flex items-center gap-[6px]"><Folder size={15} strokeWidth={1.7} />{b}</a>
            ))}
          </div>
          <button aria-label="更多书签" className="ml-auto mr-[14px] text-base leading-4 font-medium">»</button>
          <span className="w-px h-3.5 bg-[#d6dae2] mr-[13px]" />
          <a href="#all" className="flex items-center gap-[6px] mr-[13px]"><Folder size={15} strokeWidth={1.7} />所有书签</a>
        </div>
      </div>
    </div>
  )
}

const ranges = ['1天', '5天', '1个月', '3个月', '6个月', 'YTD', '1年', '5年', '全部']

function BrowserWindow({ m }) {
  return (
    <section className="min-w-0 flex flex-col bg-[#383838]">
      <BrowserChrome m={m} />
      <TopBar m={m} />
      <div className="flex flex-1 mt-[3px]">
        <LeftRail />
        <div className="flex-1 min-w-0 ml-[3px] mr-1 flex flex-col">
          <div className="relative">
            <ChartDrawing m={m} />
            <Legend m={m} />
          </div>
          <div className="h-[31px] bg-[#1e1e1e] border-t border-[#2b2b2b] flex items-center pl-3 text-[11px] text-[#d0d0d0]">
            <div className="flex gap-[11px]">{ranges.map((r) => <button key={r}>{r}</button>)}</div>
            <span className="w-px h-4 bg-[#4a4a4a] ml-[9px] mr-[11px]" />
            <button aria-label="前往日期">
              <Glyph className="w-[18px] h-[18px]"><path d="M4 12V7a2 2 0 012-2h16a3 3 0 013 3v14a3 3 0 01-3 3h-7M4 11h21M9 2v5M20 2v5M2 20h9M8 17l3 3-3 3" /></Glyph>
            </button>
            <button className="ml-auto mr-2 text-xs">00:13:35 UTC+8</button>
          </div>
          <div className="mt-[5px] h-[29px] bg-[#2e2e2e] flex items-center text-[#c8c8c8] text-xs">
            <button className="flex items-center gap-[6px] pl-[7px] w-[104px] whitespace-nowrap">
              <span className="w-5 h-5 rounded bg-white text-[#222222] flex items-center justify-center">
                <Glyph className="w-4 h-4"><path d="M3 16l5-3 6 4 5-4 6-1" strokeWidth="2" /><circle cx="10" cy="6" r="2" fill="currentColor" /><circle cx="18" cy="23" r="2" fill="currentColor" /></Glyph>
              </span>
              策略测试器
            </button>
            <button className="h-full w-[59px] bg-[#181818] whitespace-nowrap">交易面板</button>
            <div className="ml-auto flex items-center gap-[14px] mr-[7px]">
              <button aria-label="展开面板"><ChevronUp size={18} strokeWidth={1.4} /></button>
              <button aria-label="最大化面板">
                <Glyph className="w-[18px] h-[18px]"><path d="M3 10V7a3 3 0 013-3h4M18 4h4a3 3 0 013 3v3M25 18v3a3 3 0 01-3 3h-4M10 24H6a3 3 0 01-3-3v-3M10 4h8M10 24h8" /></Glyph>
              </button>
            </div>
          </div>
        </div>
        <RightRail />
      </div>
    </section>
  )
}

const App24 = ({ children }) => <svg viewBox="0 0 24 24" className="w-[22px] h-[22px]">{children}</svg>

const Chrome = () => (
  <>
    <circle cx="12" cy="12" r="11" fill="#e8b92c" />
    <path d="M2.5 6.5A11 11 0 0121.500 6.5H12a5.500 5.500 0 00-4.800 8.200z" fill="#dd4436" />
    <path d="M2.500 6.500A11 11 0 0011 23l5-8.500a5.500 5.500 0 01-9 0z" fill="#2f9e4f" />
    <circle cx="12" cy="12" r="5" fill="#3d7de0" stroke="#ffffff" strokeWidth="1.500" />
  </>
)

const apps = [
  ['开始', <App24><path d="M1 1h10.500v10.500H1zM12.500 1H23v10.500H12.500zM1 12.500h10.500V23H1zM12.500 12.500H23V23H12.500z" fill="#4fb9f0" /></App24>],
  ['搜索', <App24><circle cx="10" cy="10" r="7.500" fill="#6a6a6a" stroke="#dcdcdc" strokeWidth="2.500" /><path d="M16 16l5 5" stroke="#dcdcdc" strokeWidth="3" /></App24>],
  ['任务视图', <App24><rect x="7" y="2" width="16" height="14" rx="1" fill="#e8e8e8" /><rect x="1" y="8" width="15" height="13" rx="1" fill="#8a8a8a" opacity="0.9" /></App24>],
  ['文件资源管理器', <App24><path d="M1 2h8l2 3h12v17H1z" fill="#f4c53a" /><path d="M6 16h12v6H6z" fill="#1f6fb8" /></App24>],
  ['夸克', <App24><path d="M12 4l7 13" stroke="#ee5a8c" strokeWidth="6" strokeLinecap="round" /><path d="M12 4L4 19" stroke="#f0b03a" strokeWidth="6" strokeLinecap="round" /><path d="M4 20c4-6 8-6 15-1" stroke="#24b8e8" strokeWidth="6" strokeLinecap="round" fill="none" /></App24>],
  ['Copilot', <App24><path d="M5 3h9l-4 13H4q-4 0-3-4z" fill="#2a7fe0" /><path d="M9 3h7l3 6h-8z" fill="#3ec880" /><path d="M14 7h6q4 0 3 4l-2 7h-10z" fill="#c14be0" /><path d="M10 19h13v3H10z" fill="#dcdcdc" /></App24>],
  ['记事本', <App24><path d="M3 2h15v20H3z" fill="#e8eedc" /><path d="M3 13c5-5 9 2 15-3v12H3z" fill="#5cae2a" /><path d="M13 19L22 4" stroke="#c8a040" strokeWidth="2" /></App24>],
  ['Chrome', <App24><Chrome /><circle cx="19" cy="5" r="5" fill="#a89088" /></App24>, 'active'],
  ['抖音', <App24><circle cx="12" cy="12" r="11" fill="#050505" /><path d="M13 6v9a3 3 0 11-3-3M13 6c0 2 2 4 4 4" stroke="#f4f4f4" strokeWidth="2.200" fill="none" /></App24>],
  ['WPS', <App24><path d="M1 5h22M3 6l4 13 5-11 4 11 6-14" stroke="#d8402f" strokeWidth="3.500" fill="none" strokeLinejoin="round" /></App24>],
  ['Edge', <App24><circle cx="12" cy="12" r="11" fill="#1f86d8" /><path d="M3 8C7-1 22 0 23 11c0 5-7 6-9 3 2-5-5-9-11-6z" fill="#3fd0a0" /><path d="M10 11c-3 5 1 10 7 10" stroke="#0c4f9c" strokeWidth="3" fill="none" /></App24>],
  ['Chrome 2', <App24><Chrome /><circle cx="19" cy="4" r="4" fill="#7aa84a" /></App24>],
  ['微信', <App24><rect x="1" y="1" width="22" height="22" rx="5" fill="#12c45c" /><ellipse cx="10" cy="10" rx="6" ry="5" fill="#ffffff" /><ellipse cx="16" cy="15" rx="5" ry="4" fill="#e4f6e8" stroke="#12c45c" /></App24>, 'open'],
  ['会议', <App24><rect x="2" y="2" width="20" height="20" rx="2" fill="#1468e0" /><path d="M5 15l5-5v5l5-5v5l4-4v4" stroke="#ffffff" strokeWidth="3" fill="none" strokeLinejoin="round" /></App24>, 'open'],
  ['MuMu', <App24><rect x="2" y="2" width="20" height="20" rx="4" fill="#f4f6f8" /><path d="M6 17V7l6 6 6-6v10" stroke="#2c5a78" strokeWidth="2" fill="none" /></App24>, 'open'],
  ['猫爪', <App24><circle cx="12" cy="12" r="11" fill="#c48ae8" /><path d="M2 8a11 11 0 0120 0z" fill="#f08ab0" /><path d="M6 8l3 2h6l3-2v8q-6 4-12 0z" fill="#ffffff" /></App24>, 'open'],
  ['OBS', <App24><circle cx="12" cy="12" r="10" fill="#2a2a2a" stroke="#c4c4c4" strokeWidth="1.800" /><path d="M12 12c-4-1-4-5-2-7M12 12c4-2 7 0 7 3M12 12c0 4-4 6-7 4" stroke="#c4c4c4" strokeWidth="2.200" fill="none" /><circle cx="19" cy="5" r="5" fill="#f01414" /></App24>, 'open'],
]

function Taskbar() {
  return (
    <footer className="h-[43px] bg-[#383838] border-t-2 border-[#555555] flex items-center pl-[7px] pr-4 text-[#e8e8e8] text-[10px] leading-[13px]">
      {apps.map(([label, icon, state]) => (
        <button key={label} aria-label={label} className={`relative w-[37px] h-[38px] flex items-center justify-center rounded ${state === 'active' ? 'bg-[#454545]' : ''}`}>
          {icon}
          {state === 'active' && <span className="absolute bottom-px w-3.5 h-[3px] rounded-full bg-[#57b4e8]" />}
          {state === 'open' && <span className="absolute bottom-px w-[5px] h-0.5 rounded-full bg-[#a0a0a0]" />}
        </button>
      ))}
      <div className="ml-auto flex items-center gap-1">
        <svg viewBox="0 0 24 24" className="w-[22px] h-[22px]"><path d="M16 2c9 6 8 20-5 20-5 0-9-2-10-6 9 2 17-5 15-14z" fill="#f2a83a" /></svg>
        <div>4°C<br />晴</div>
      </div>
      <div className="w-[107px] text-right">0:13<br />2026/1/6</div>
    </footer>
  )
}

export default function App() {
  return (
    <main className="min-h-screen bg-[#141414] pl-[277px] pr-[278px] flex flex-col font-['Noto_Sans','Noto_Sans_CJK_SC',sans-serif]">
      <div className="overflow-hidden border-l border-[#555555]">
        <div className="-mr-[5px] grid grid-cols-[922fr_2px_925fr]">
          <BrowserWindow m={btc} />
          <div className="bg-[#808080]" />
          <BrowserWindow m={eth} />
        </div>
        <Taskbar />
      </div>
      <div className="mt-[15px] mx-auto w-[600px] h-[10px] rounded-full bg-[#aeaeae]" />
    </main>
  )
}
